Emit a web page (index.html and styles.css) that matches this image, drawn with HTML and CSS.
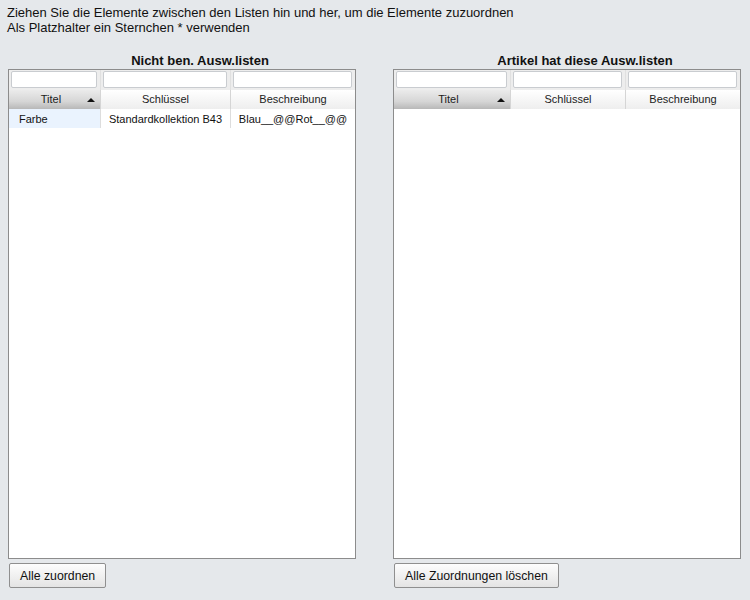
FILE: index.html
```html
<!DOCTYPE html>
<html>
<head>
<meta charset="utf-8">
<link rel="stylesheet" href="styles.css">
</head>
<body>
<div class="page">
  <div class="intro">
    <div>Ziehen Sie die Elemente zwischen den Listen hin und her, um die Elemente zuzuordnen</div>
    <div>Als Platzhalter ein Sternchen * verwenden</div>
  </div>
  <div class="panels">
    <div class="panel">
      <div class="title">Nicht ben. Ausw.listen</div>
      <div class="grid left">
        <div class="filters">
          <div class="fcell"><input class="finput" type="text"></div>
          <div class="fcell"><input class="finput" type="text"></div>
          <div class="fcell"><input class="finput" type="text"></div>
        </div>
        <div class="header">
          <div class="hcell sorted"><span>Titel</span><span class="arrow"></span></div>
          <div class="hcell">Schlüssel</div>
          <div class="hcell">Beschreibung</div>
        </div>
        <div class="row">
          <div class="cell first">Farbe</div>
          <div class="cell c">Standardkollektion B43</div>
          <div class="cell c">Blau__@@Rot__@@</div>
        </div>
      </div>
      <div class="actions"><button class="btn">Alle zuordnen</button></div>
    </div>
    <div class="panel">
      <div class="title">Artikel hat diese Ausw.listen</div>
      <div class="grid right">
        <div class="filters">
          <div class="fcell"><input class="finput" type="text"></div>
          <div class="fcell"><input class="finput" type="text"></div>
          <div class="fcell"><input class="finput" type="text"></div>
        </div>
        <div class="header">
          <div class="hcell sorted"><span>Titel</span><span class="arrow"></span></div>
          <div class="hcell">Schlüssel</div>
          <div class="hcell">Beschreibung</div>
        </div>
      </div>
      <div class="actions"><button class="btn">Alle Zuordnungen löschen</button></div>
    </div>
  </div>
</div>
</body>
</html>
```

FILE: styles.css
```css
html, body {
  margin: 0;
  padding: 0;
  background: #e5e8eb;
}
body {
  font-family: "Liberation Sans", Arial, sans-serif;
  font-size: 12px;
  color: #111;
  width: 750px;
  height: 600px;
  overflow: hidden;
}
.page {
  padding: 5px 8px 0 7px;
}
.intro {
  line-height: 15px;
  font-size: 13px;
}
.panels {
  display: flex;
  gap: 37px;
  margin-top: 17px;
  padding-left: 1px;
}
.panel {
  width: 348px;
}
.title {
  font-weight: bold;
  font-size: 13px;
  text-align: center;
  padding-left: 36px;
  height: 17px;
  line-height: 17px;
  white-space: nowrap;
}
.grid {
  box-sizing: border-box;
  height: 490px;
  border: 1px solid #8c8c8c;
  background: #fff;
}
.filters, .header, .row {
  display: grid;
}
.left .filters, .left .header, .left .row {
  grid-template-columns: 91px 130px 1fr;
}
.right .filters, .right .header, .right .row {
  grid-template-columns: 116px 115px 1fr;
}
.filters {
  background: #ededed;
  height: 20px;
}
.fcell {
  padding: 1px 3px 0 2px;
  border-left: 1px solid #e0e0e0;
}
.fcell:first-child {
  border-left: none;
  padding-left: 2px;
}
.finput {
  display: block;
  box-sizing: border-box;
  width: 100%;
  height: 17px;
  margin: 0;
  border: 1px solid #c9ccd0;
  border-radius: 2px;
  background: #fff;
  padding: 0;
}
.header {
  height: 19px;
}
.hcell {
  box-sizing: border-box;
  background: linear-gradient(#ffffff, #eeeeee);
  border-left: 1px solid #d5d5d5;
  text-align: center;
  line-height: 19px;
  font-size: 11px;
  color: #222;
}
.hcell.sorted {
  border-left: none;
  background: linear-gradient(#ebebeb 0%, #d6d6d6 60%, #b8b8b8 100%);
  position: relative;
  color: #1c1c1c;
  padding-right: 7px;
}
.arrow {
  position: absolute;
  right: 5px;
  top: 8px;
  width: 0;
  height: 0;
  border-left: 4px solid transparent;
  border-right: 4px solid transparent;
  border-bottom: 4px solid #111;
}
.row {
  height: 19px;
}
.cell {
  line-height: 20px;
  font-size: 11px;
  border-left: 1px solid #dddddd;
  white-space: nowrap;
  overflow: hidden;
}
.cell.first {
  border-left: none;
  background: #eaf3fe;
  padding-left: 10px;
}
.cell.c {
  text-align: center;
}
.actions {
  padding-top: 4px;
  padding-left: 1px;
}
.btn {
  font-family: "Liberation Sans", Arial, sans-serif;
  font-size: 12.3px;
  color: #111;
  height: 25px;
  padding: 0 10px;
  border: 1px solid #8f8f8f;
  border-radius: 2px;
  background: linear-gradient(#fdfdfd, #e4e4e4);
  margin: 0;
}
```
